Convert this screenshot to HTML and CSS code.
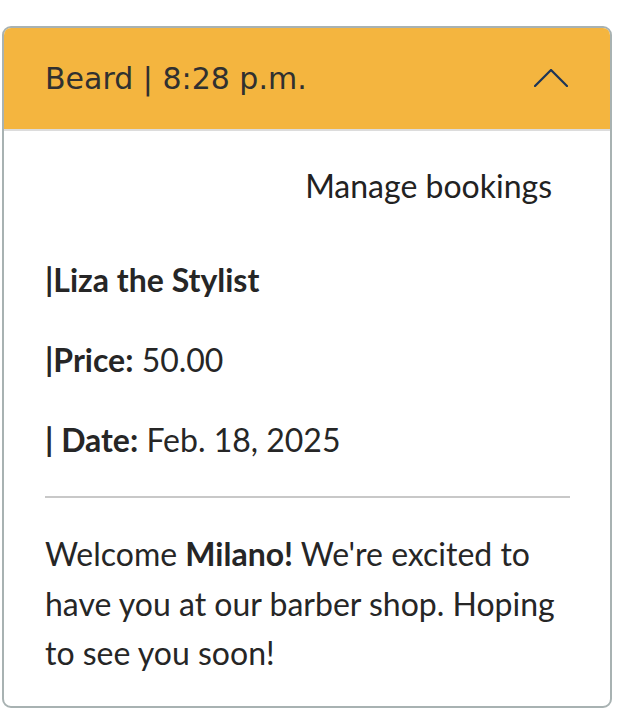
FILE: index.html
```html
<!DOCTYPE html>
<html lang="en">
<head>
<meta charset="utf-8">
<title>Booking</title>
<link rel="stylesheet" href="styles.css">
</head>
<body>
<div class="card">
  <div class="card-header">
    <span class="title">Beard | 8:28 p.m.</span>
    <svg class="chevron" width="34" height="18" viewBox="0 0 34 18" aria-hidden="true">
      <polyline points="1,17 17,1 33,17" fill="none" stroke="#1d3557" stroke-width="2.2" stroke-linecap="square"/>
    </svg>
  </div>
  <div class="card-body">
    <div class="manage-row"><a class="manage" href="#">Manage bookings</a></div>
    <p class="line"><strong>|Liza the Stylist</strong></p>
    <p class="line"><strong>|Price:</strong> 50.00</p>
    <p class="line"><strong>| Date:</strong> Feb. 18, 2025</p>
    <hr class="divider">
    <p class="welcome">Welcome <strong>Milano!</strong> We're excited to have you at our barber shop. Hoping to see you soon!</p>
  </div>
</div>
</body>
</html>
```

FILE: styles.css
```css
html, body {
  margin: 0;
  padding: 0;
  background: #ffffff;
}
body {
  padding: 26px 12px 0 2px;
  font-family: Lato, "Liberation Sans", sans-serif;
  color: #262626;
}
.card {
  border: 2px solid #a8b2b2;
  border-radius: 9px;
  overflow: hidden;
  background: #fff;
}
.card-header {
  background: #f4b53f;
  border-bottom: 2px solid #dcdcdc;
  height: 101px;
  display: flex;
  align-items: center;
  justify-content: space-between;
  padding: 0 42px 0 41px;
}
.title {
  font-family: "DejaVu Sans", sans-serif;
  font-size: 30px;
  color: #303030;
  letter-spacing: 0;
}
.chevron {
  display: block;
  margin-top: -2px;
}
.card-body {
  padding: 33px 40px 28px 41px;
  font-size: 32px;
}
.manage-row {
  display: flex;
  justify-content: flex-end;
  padding-right: 18px;
}
.manage {
  color: #222;
  text-decoration: none;
  line-height: 44px;
}
.line {
  margin: 0;
  line-height: 44px;
  margin-top: 36px;
}
.line:first-of-type {
  margin-top: 50px;
}
.divider {
  border: 0;
  border-top: 2px solid #c8c8c8;
  margin: 34px 0 31px;
}
.welcome {
  margin: 0;
  line-height: 49.5px;
}
```
